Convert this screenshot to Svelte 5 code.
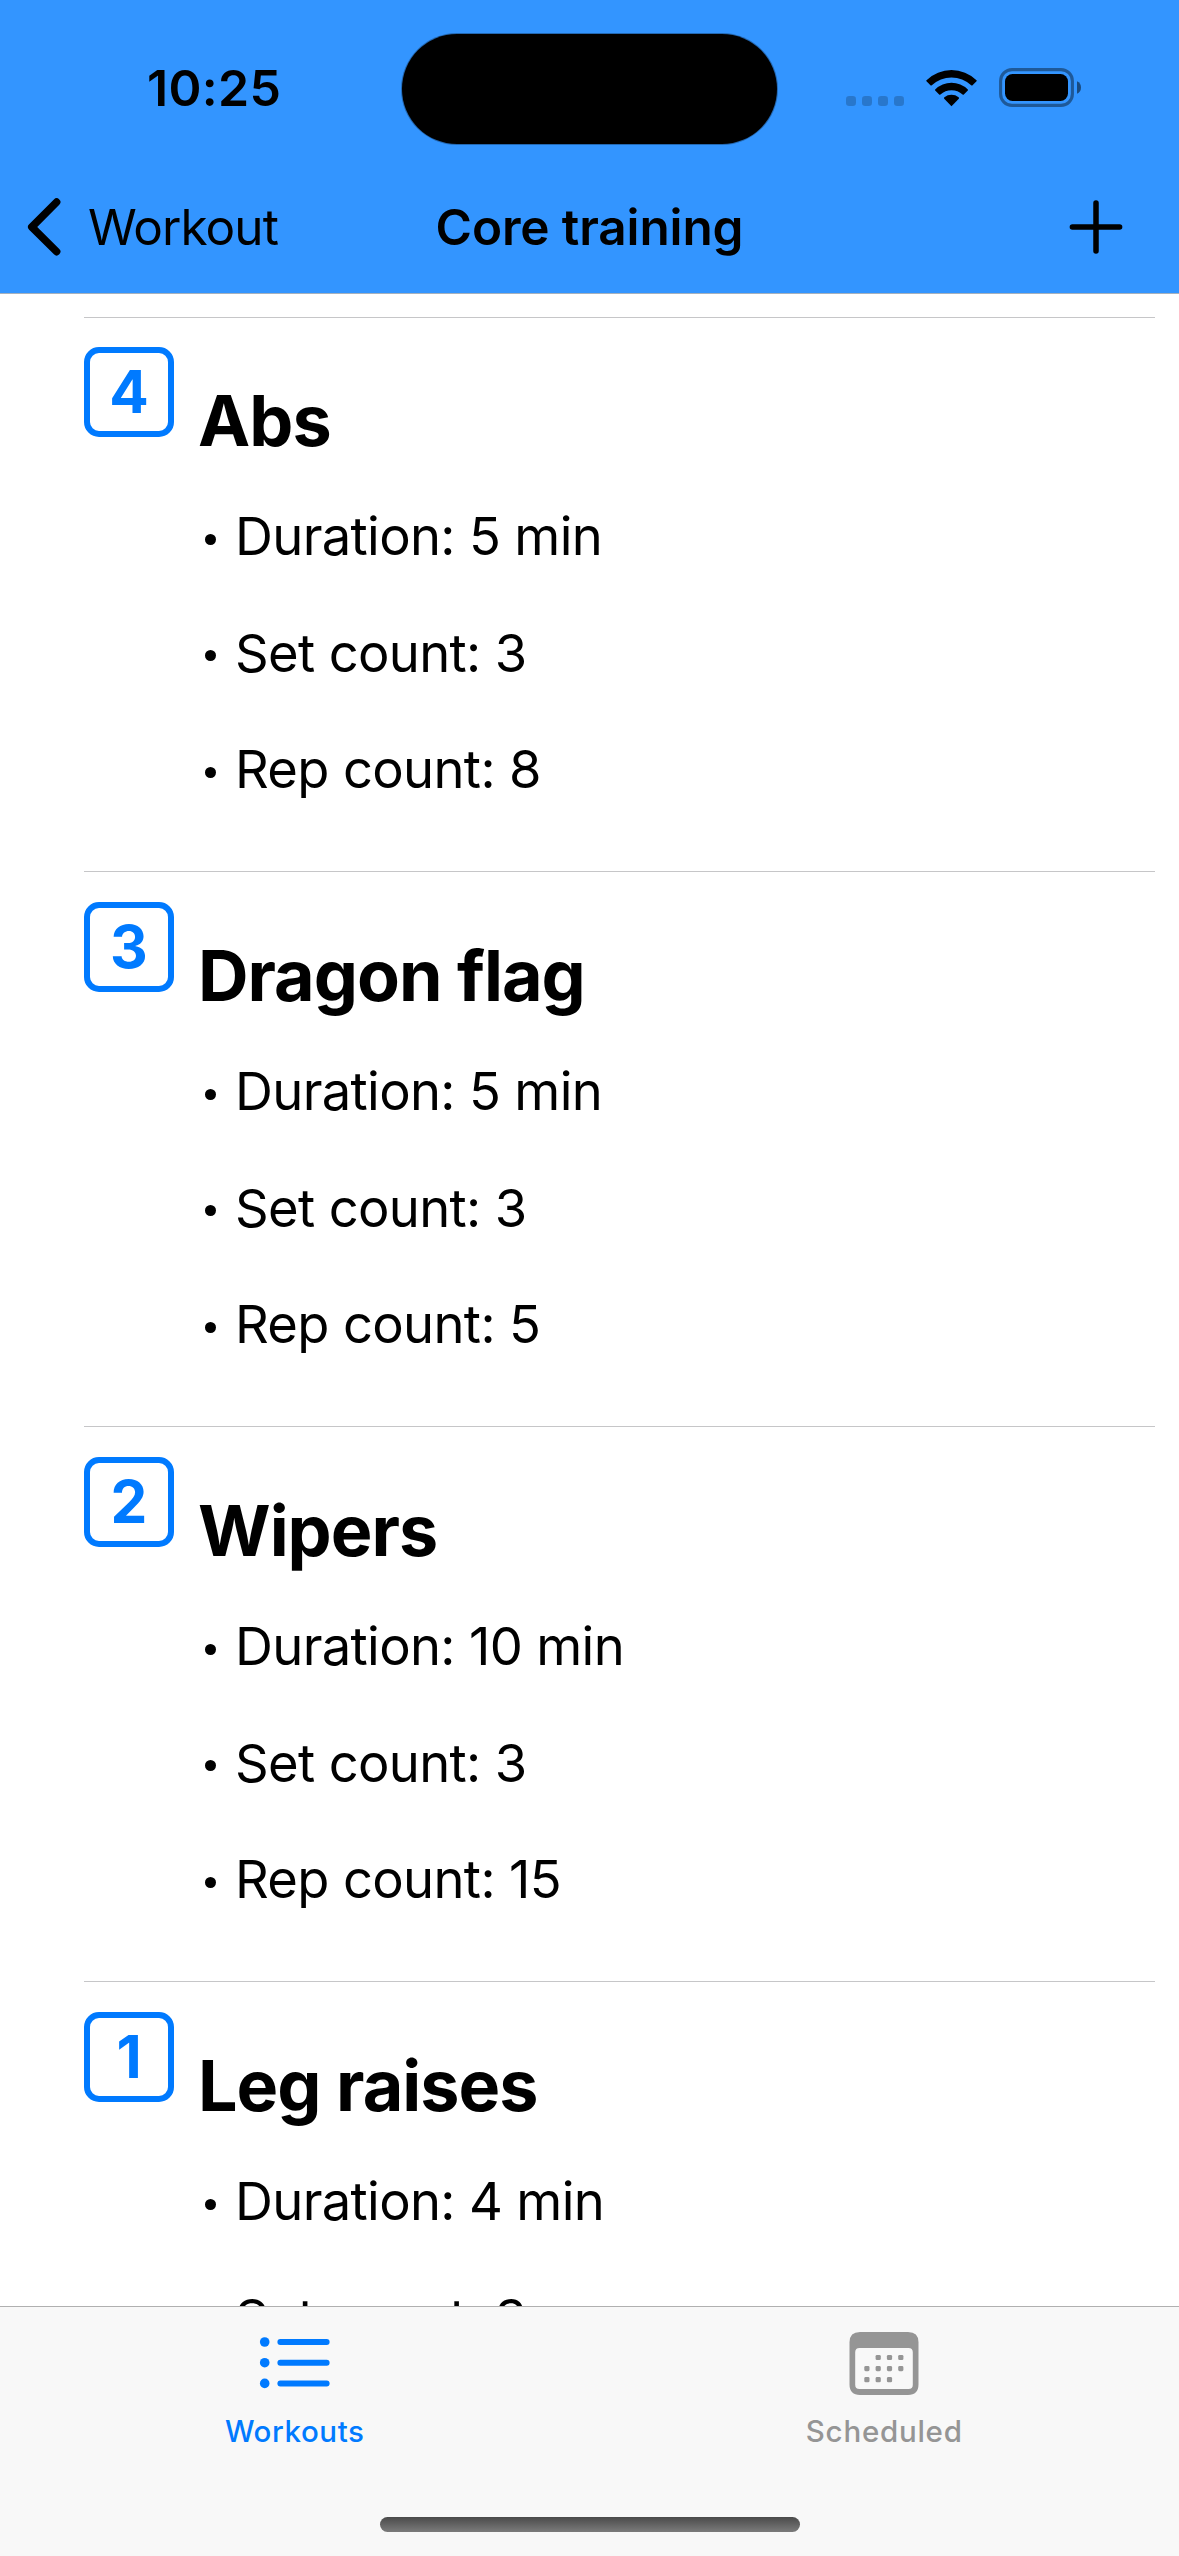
<script>
  // The last exercise continues under the tab bar, so only its visible details are listed.
  const exercises = [
    { order: 4, name: 'Abs', details: ['Duration: 5 min', 'Set count: 3', 'Rep count: 8'] },
    { order: 3, name: 'Dragon flag', details: ['Duration: 5 min', 'Set count: 3', 'Rep count: 5'] },
    { order: 2, name: 'Wipers', details: ['Duration: 10 min', 'Set count: 3', 'Rep count: 15'] },
    { order: 1, name: 'Leg raises', details: ['Duration: 4 min', 'Set count: 3'] }
  ];
  const calendarDots = [
    [1, 0], [2, 0], [3, 0],
    [0, 1], [1, 1], [2, 1], [3, 1],
    [0, 2], [1, 2], [2, 2]
  ];
</script>

<div class="screen">
  <header>
    <div class="status">
      <div class="time">10:25</div>
      <div class="island"></div>
      <div class="indicators">
        <svg class="cell" width="58" height="10" viewBox="0 0 58 10">
          {#each [0, 16, 32, 48] as x}
            <rect {x} y="0" width="10" height="10" rx="3.2" />
          {/each}
        </svg>
        <svg class="wifi" width="51" height="38" viewBox="0 0 51 38">
          <path d="M25.5 37.2 L18.2 29.8 Q17.6 29 18.4 28.3 A11.5 11.5 0 0 1 32.6 28.3 Q33.4 29 32.8 29.8 Z" />
          <path d="M9.2 20.4 A23.4 23.4 0 0 1 41.8 20.4 Q42.4 21 41.8 21.6 L37.6 25.7 Q37.2 26 36.6 25.5 A16.5 16.5 0 0 0 14.4 25.5 Q13.8 26 13.4 25.7 L9.2 21.6 Q8.6 21 9.2 20.4 Z" />
          <path d="M0.5 11.2 A36 36 0 0 1 50.5 11.2 Q51 11.8 50.5 12.3 L46.3 16.4 Q45.8 16.8 45.2 16.3 A28.6 28.6 0 0 0 5.8 16.3 Q5.2 16.8 4.7 16.4 L0.5 12.3 Q0 11.8 0.5 11.2 Z" />
        </svg>
        <svg class="battery" width="83" height="39" viewBox="0 0 83 39">
          <rect x="1.6" y="1.6" width="71.8" height="35.8" rx="11.4" fill="none" stroke="#000" stroke-opacity="0.4" stroke-width="3.1" />
          <rect x="6" y="6" width="63" height="27" rx="7.6" />
          <path d="M78 13.2 Q82 15 82 19.5 Q82 24 78 25.8 Z" fill-opacity="0.5" />
        </svg>
      </div>
    </div>
    <nav>
      <div class="back">
        <svg width="36" height="60" viewBox="0 0 36 60">
          <path d="M29.6 5.1 L4.8 30 L29.6 54.6" fill="none" stroke="#000" stroke-width="7.6" stroke-linecap="round" stroke-linejoin="round" />
        </svg>
        <span>Workout</span>
      </div>
      <h1>Core training</h1>
      <div class="add">
        <svg width="54" height="54" viewBox="0 0 54 54">
          <path d="M27 3 V51 M3.4 27 H50.6" fill="none" stroke="#000" stroke-width="5.5" stroke-linecap="round" />
        </svg>
      </div>
    </nav>
  </header>

  <main>
    {#each exercises as item}
      <section>
        <div class="badge">{item.order}</div>
        <div class="info">
          <h2>{item.name}</h2>
          <ul>
            {#each item.details as detail}
              <li>{detail}</li>
            {/each}
          </ul>
        </div>
      </section>
    {/each}
  </main>

  <footer>
    <div class="tabs">
      <div class="tab active">
        <svg width="72" height="64" viewBox="0 0 72 64">
          {#each [11, 31.7, 52.4] as y}
            <circle cx="5.7" cy={y} r="4.8" />
            <rect x="18.4" y={y - 3} width="52.2" height="6" rx="3" />
          {/each}
        </svg>
        <span class="workouts">Workouts</span>
      </div>
      <div class="tab">
        <svg width="70" height="64" viewBox="0 0 70 64">
          <path fill-rule="evenodd" d="M11 1 H59 Q69.5 1 69.5 11.3 V53.3 Q69.5 64 59 64 H11 Q.5 64 .5 53.3 V11.3 Q.5 1 11 1 Z M10.5 17 Q6.2 17 6.2 21.3 V53.7 Q6.2 58 10.5 58 H59.5 Q63.8 58 63.8 53.7 V21.3 Q63.8 17 59.5 17 Z" />
          {#each calendarDots as [col, row]}
            <rect x={15.3 + col * 11.3} y={23.9 + row * 11.1} width="5.2" height="5.2" rx="1.4" />
          {/each}
        </svg>
        <span class="scheduled">Scheduled</span>
      </div>
    </div>
    <div class="home"></div>
  </footer>
</div>

<style>
  :global(body) { margin: 0; background: #fff; }
  .screen {
    width: 1179px;
    height: 2556px;
    display: flex;
    flex-direction: column;
    overflow: hidden;
    background: #fff;
    color: #000;
    font-family: Inter, "Liberation Sans", sans-serif;
  }
  svg { display: block; flex: none; }
  header {
    flex: none;
    box-sizing: border-box;
    height: 294px;
    background: #3395ff;
    border-bottom: 1px solid #a5b1be;
  }
  .status {
    height: 176px;
    display: grid;
    grid-template-columns: 402px 375px 402px;
    align-items: start;
  }
  .time {
    padding: 58px 0 0 147px;
    font-size: 50px;
    font-weight: 600;
    line-height: 60px;
    letter-spacing: 0.3px;
    white-space: nowrap;
  }
  .island {
    height: 110px;
    margin-top: 34px;
    border-radius: 55px;
    background: #000;
    box-shadow: 0 0 0 1px rgba(0, 0, 0, 0.3);
  }
  .indicators { display: flex; align-items: flex-start; padding-left: 69px; }
  .cell { margin-top: 96px; fill: #000; fill-opacity: 0.2; }
  .wifi { margin: 69px 0 0 22px; }
  .battery { margin: 68px 0 0 22px; }
  nav {
    height: 102px;
    display: grid;
    grid-template-columns: 1fr auto 1fr;
    align-items: center;
  }
  .back {
    display: flex;
    align-items: center;
    padding-left: 27px;
    gap: 25px;
    font-size: 49.5px;
    line-height: 60px;
    letter-spacing: -0.95px;
  }
  h1 {
    margin: 0;
    font-size: 49.5px;
    font-weight: 600;
    line-height: 60px;
    letter-spacing: -0.12px;
  }
  .add { justify-self: end; padding-right: 56px; }
  main { flex: 1; min-height: 0; overflow: hidden; padding: 23px 24px 0 84px; }
  section {
    box-sizing: border-box;
    height: 555px;
    display: flex;
    align-items: flex-start;
    border-top: 1px solid #c6c6c8;
    padding-top: 30px;
  }
  section:first-child { height: 554px; padding-top: 29px; }
  .badge {
    flex: none;
    box-sizing: border-box;
    width: 90px;
    height: 90px;
    border: 6px solid #007aff;
    border-radius: 15px;
    color: #007aff;
    font-size: 58.5px;
    font-weight: 700;
    line-height: 78px;
    text-align: center;
  }
  .info { padding: 31px 0 0 24px; }
  h2 {
    margin: 0;
    font-size: 70px;
    font-weight: 700;
    line-height: 86px;
    letter-spacing: -1px;
    white-space: nowrap;
  }
  ul { margin: 14px 0 0; padding: 0; list-style: none; }
  li {
    display: flex;
    align-items: center;
    height: 116.5px;
    font-size: 52.5px;
    letter-spacing: -0.65px;
    white-space: nowrap;
  }
  li::before {
    content: "";
    width: 11px;
    height: 11px;
    margin: 6px 19px 0 7px;
    border-radius: 50%;
    background: #000;
  }
  footer {
    flex: none;
    box-sizing: border-box;
    height: 250px;
    display: flex;
    flex-direction: column;
    align-items: center;
    background: #f8f8f8;
    border-top: 1px solid #b0b0b0;
  }
  .tabs { width: 100%; height: 210px; display: grid; grid-template-columns: 1fr 1fr; }
  .tab {
    display: flex;
    flex-direction: column;
    align-items: center;
    padding-top: 24px;
    color: #959595;
    fill: #959595;
    font-size: 29.5px;
    font-weight: 500;
    line-height: 36px;
  }
  .tab span { margin-top: 18px; }
  .workouts { letter-spacing: 0.6px; }
  .scheduled { letter-spacing: 0.75px; }
  .active { color: #007aff; fill: #007aff; }
  .home {
    width: 420px;
    height: 15px;
    border-radius: 8px;
    background: linear-gradient(#4a4a4a, #7b7b7b);
  }
</style>
